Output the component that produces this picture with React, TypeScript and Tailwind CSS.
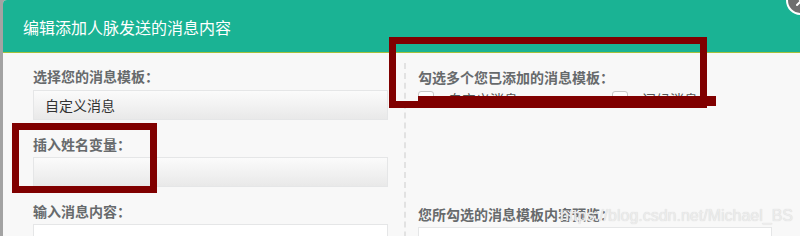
import React from "react";

const label = "h-[20px] leading-[20px] text-[14px] font-bold text-[#676a6c] whitespace-nowrap";
const selectBox =
  "h-[30px] border border-[#e5e6e7] bg-linear-to-b from-[#fbfbfb] to-[#e9e9e9] px-[11px] flex items-center text-[14px] text-[#333]";

export default function App() {
  return (
    <div className="relative w-[800px] h-[236px] overflow-hidden flex bg-[#a3a3a3] font-['Noto_Sans_CJK_SC','Noto_Sans',sans-serif]">
      <div className="w-[3px] flex-shrink-0" />

      <div className="flex-1 flex flex-col rounded-tl-[4px] overflow-hidden bg-[#f8f8f8]">
        {/* Header */}
        <div className="h-[53px] flex-shrink-0 bg-[#1ab394] border-b border-[#a4c03c] px-[20px] pt-[1px] flex items-center">
          <h4 className="text-[16px] leading-[20px] text-white">编辑添加人脉发送的消息内容</h4>
        </div>

        {/* Body */}
        <div className="flex-1 flex px-[30px]">
          {/* Left column */}
          <div className="w-[355px] flex-shrink-0 flex flex-col">
            <div className={`${label} mt-[13px] mb-[4px]`}>选择您的消息模板：</div>
            <div className={selectBox}>自定义消息</div>

            <div className={`${label} mt-[14px] mb-[3px]`}>插入姓名变量：</div>
            <div className={selectBox} />

            <div className={`${label} mt-[14px] mb-[3px]`}>输入消息内容：</div>
            <div className="h-[60px] border border-[#e5e6e7] bg-white" />
          </div>

          {/* Divider */}
          <div className="ml-[16px] mr-[12px] mt-[10px] border-l-2 border-dashed border-[#e2e2e2]" />

          {/* Right column */}
          <div className="w-[354px] flex-shrink-0 flex flex-col">
            <div className={`${label} mt-[14px] mb-[4px]`}>勾选多个您已添加的消息模板：</div>
            <div className="flex items-start h-[18px]">
              <div className="flex items-start gap-[14px] w-[194px]">
                <span className="w-[16px] h-[14px] rounded-t-[3px] border border-[#c8c8c8] bg-white" />
                <span className="text-[14px] leading-[16px] text-[#555]">自定义消息</span>
              </div>
              <div className="flex items-start gap-[14px]">
                <span className="w-[16px] h-[14px] rounded-t-[3px] border border-[#c8c8c8] bg-white" />
                <span className="text-[14px] leading-[16px] text-[#555]">问候消息</span>
              </div>
            </div>

            <div className={`${label} mt-[95px] mb-[3px]`}>您所勾选的消息模板内容预览：</div>
            <div className="h-[60px] border border-[#e5e6e7] bg-white" />
          </div>
        </div>
      </div>

      {/* Close button */}
      <div className="absolute left-[786px] top-[-14px] w-[29px] h-[29px] rounded-full bg-[#6f6f6f] border-2 border-white flex items-center justify-center">
        <svg width="14" height="14" viewBox="0 0 14 14" fill="none" stroke="white" strokeWidth="2" strokeLinecap="round">
          <path d="M3 3l8 8M11 3l-8 8" />
        </svg>
      </div>

      {/* Annotations */}
      <div className="absolute left-[12px] top-[123px] w-[145px] h-[70px] border-[7px] border-[#800000]" />
      <div className="absolute left-[389px] top-[37px] w-[318px] h-[71px] border-[7px] border-[#800000]" />
      <div className="absolute left-[418px] top-[96px] w-[298px] h-[10px] bg-[#800000]" />

      {/* Watermark */}
      <div className="absolute left-[560px] top-[206px] text-[16px] leading-[20px] text-[#ececec] font-['Liberation_Sans',Arial,sans-serif] [text-shadow:0_0_1px_#d0d0d0]">
        https://blog.csdn.net/Michael_BS
      </div>
    </div>
  );
}
